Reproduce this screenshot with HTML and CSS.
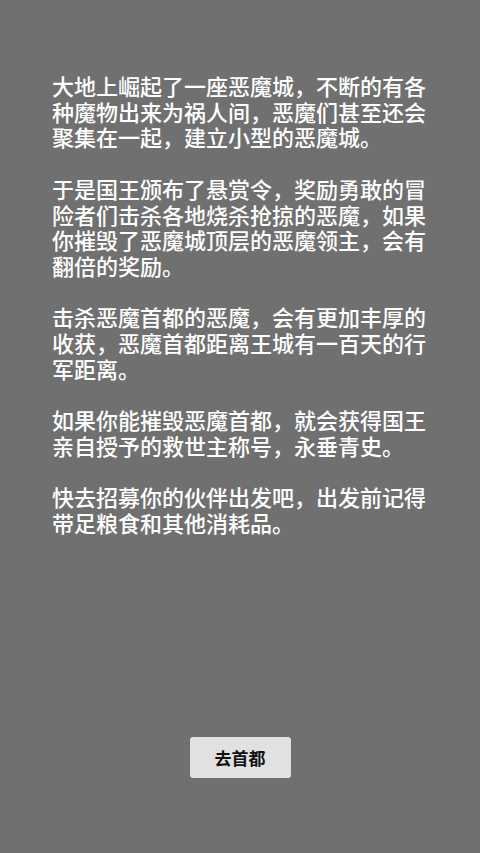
FILE: index.html
```html
<!DOCTYPE html>
<html lang="zh-CN">
<head>
<meta charset="utf-8">
<link rel="stylesheet" href="styles.css">
</head>
<body>
<main class="screen">
  <section class="story">
    <p>大地上崛起了一座恶魔城，不断的有各种魔物出来为祸人间，恶魔们甚至还会聚集在一起，建立小型的恶魔城。</p>
    <p>于是国王颁布了悬赏令，奖励勇敢的冒险者们击杀各地烧杀抢掠的恶魔，如果你摧毁了恶魔城顶层的恶魔领主，会有翻倍的奖励。</p>
    <p>击杀恶魔首都的恶魔，会有更加丰厚的收获，恶魔首都距离王城有一百天的行军距离。</p>
    <p>如果你能摧毁恶魔首都，就会获得国王亲自授予的救世主称号，永垂青史。</p>
    <p>快去招募你的伙伴出发吧，出发前记得带足粮食和其他消耗品。</p>
  </section>
  <div class="actions">
    <button class="go-btn" type="button">去首都</button>
  </div>
</main>
</body>
</html>
```
FILE: styles.css
```css
html, body {
  margin: 0;
  padding: 0;
}
body {
  background: #707070;
  font-family: "Noto Sans CJK SC", "Noto Sans", sans-serif;
}
.screen {
  height: 853px;
  display: flex;
  flex-direction: column;
  box-sizing: border-box;
  padding: 73px 52px 75px;
}
.story {
  flex: 1;
  color: #ffffff;
  font-size: 22px;
  font-weight: 500;
  line-height: 25.7px;
}
.story p {
  margin: 0 0 25.7px;
}
.actions {
  display: flex;
  justify-content: center;
}
.go-btn {
  width: 101px;
  height: 41px;
  border: none;
  border-radius: 3px;
  background: #e1e1e1;
  color: #111;
  font-family: "Noto Sans CJK SC", sans-serif;
  font-size: 17px;
  font-weight: 700;
  padding: 0;
}
```
